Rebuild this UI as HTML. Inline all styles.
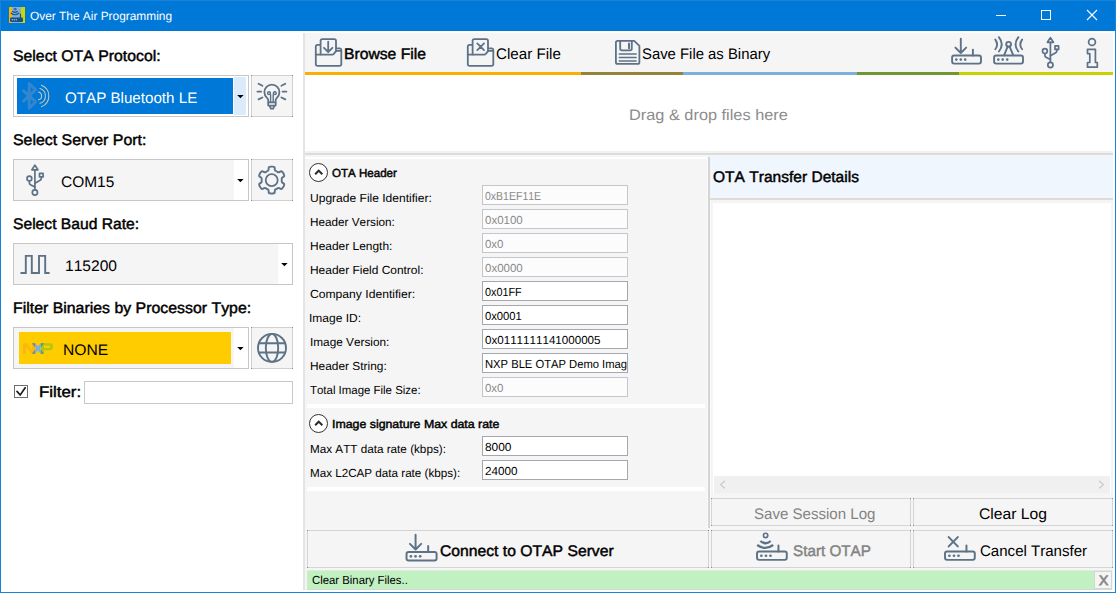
<!DOCTYPE html>
<html><head><meta charset="utf-8"><title>Over The Air Programming</title>
<style>
html,body{margin:0;padding:0;}
body{width:1116px;height:593px;overflow:hidden;background:#fff;position:relative;font-family:"Liberation Sans",sans-serif;}
.b{position:absolute;box-sizing:border-box;}
.t{position:absolute;white-space:nowrap;transform-origin:0 0;font-kerning:none;text-rendering:geometricPrecision;}
svg{position:absolute;left:0;top:0;}
</style></head><body>
<!-- window frame -->
<div class="b" style="left:0;top:0;width:1116px;height:593px;background:#1883d7"></div>
<div class="b" style="left:1px;top:1px;width:1114px;height:30px;background:#0078d7"></div>
<div class="b" style="left:1px;top:31px;width:1114px;height:561px;background:#fff"></div>
<!-- left panel -->
<div class="b" style="left:303px;top:33px;width:2px;height:557px;background:#e4e4e4"></div>
<!-- combo 1 -->
<div class="b" style="left:13px;top:75px;width:236px;height:42px;background:#fff;border:1px solid #c6c6c6"></div>
<div class="b" style="left:17px;top:78px;width:216px;height:36px;background:#0078d7"></div>
<div class="b" style="left:234px;top:77px;width:12px;height:38px;background:#dcebfc"></div>
<div class="b" style="left:251px;top:75px;width:42px;height:42px;background:#f5f5f5;border:1px solid #d0d0d0"></div>
<div class="b" style="left:251px;top:75px;width:1px;height:1px;background:#8c8c8c"></div>
<div class="b" style="left:292px;top:75px;width:1px;height:1px;background:#8c8c8c"></div>
<div class="b" style="left:251px;top:116px;width:1px;height:1px;background:#8c8c8c"></div>
<div class="b" style="left:292px;top:116px;width:1px;height:1px;background:#8c8c8c"></div>
<!-- combo 2 -->
<div class="b" style="left:13px;top:159px;width:236px;height:42px;background:#fff;border:1px solid #c6c6c6"></div>
<div class="b" style="left:14px;top:160px;width:220px;height:40px;background:#f5f5f5"></div>
<div class="b" style="left:251px;top:159px;width:42px;height:42px;background:#f5f5f5;border:1px solid #d0d0d0"></div>
<div class="b" style="left:251px;top:159px;width:1px;height:1px;background:#8c8c8c"></div>
<div class="b" style="left:292px;top:159px;width:1px;height:1px;background:#8c8c8c"></div>
<div class="b" style="left:251px;top:200px;width:1px;height:1px;background:#8c8c8c"></div>
<div class="b" style="left:292px;top:200px;width:1px;height:1px;background:#8c8c8c"></div>
<!-- combo 3 -->
<div class="b" style="left:13px;top:243px;width:280px;height:42px;background:#fff;border:1px solid #c6c6c6"></div>
<div class="b" style="left:14px;top:244px;width:264px;height:40px;background:#f5f5f5"></div>
<!-- combo 4 -->
<div class="b" style="left:13px;top:327px;width:236px;height:42px;background:#fff;border:1px solid #c6c6c6"></div>
<div class="b" style="left:14px;top:328px;width:220px;height:40px;background:#f5f5f5"></div>
<div class="b" style="left:19px;top:332px;width:212px;height:32px;background:#ffcc00"></div>
<div class="b" style="left:251px;top:327px;width:42px;height:42px;background:#f5f5f5;border:1px solid #d0d0d0"></div>
<div class="b" style="left:251px;top:327px;width:1px;height:1px;background:#8c8c8c"></div>
<div class="b" style="left:292px;top:327px;width:1px;height:1px;background:#8c8c8c"></div>
<div class="b" style="left:251px;top:368px;width:1px;height:1px;background:#8c8c8c"></div>
<div class="b" style="left:292px;top:368px;width:1px;height:1px;background:#8c8c8c"></div>
<!-- filter -->
<div class="b" style="left:14px;top:385px;width:14px;height:13px;background:#fff;border:1px solid #6e6e6e"></div>
<div class="b" style="left:84px;top:381px;width:209px;height:23px;background:#fff;border:1px solid #c8c8c8"></div>
<!-- toolbar -->
<div class="b" style="left:305px;top:33px;width:808px;height:39px;background:#f5f5f5"></div>
<div class="b" style="left:305px;top:72px;width:276px;height:3px;background:#f9b000"></div>
<div class="b" style="left:581px;top:72px;width:102px;height:3px;background:#958437"></div>
<div class="b" style="left:683px;top:72px;width:174px;height:3px;background:#7bb1db"></div>
<div class="b" style="left:857px;top:72px;width:102px;height:3px;background:#6f9830"></div>
<div class="b" style="left:959px;top:72px;width:154px;height:3px;background:#c9d200"></div>
<!-- separators below drop area -->
<div class="b" style="left:305px;top:151px;width:808px;height:2px;background:#f2f2f2"></div>
<div class="b" style="left:305px;top:153px;width:808px;height:2px;background:#dcdcdc"></div>
<div class="b" style="left:305px;top:155px;width:808px;height:2px;background:#f5f5f5"></div>
<!-- middle panel -->
<div class="b" style="left:305px;top:155px;width:808px;height:435px;background:#f5f5f5"></div>
<div class="b" style="left:305px;top:157px;width:403px;height:2px;background:#fff"></div>
<div class="b" style="left:307px;top:404px;width:398px;height:4px;background:#fff"></div>
<div class="b" style="left:307px;top:487px;width:398px;height:4px;background:#fff"></div>
<div class="b" style="left:707px;top:157px;width:4px;height:371px;background:#fafafa"></div>
<div class="b" style="left:708px;top:157px;width:2px;height:371px;background:#d4d4d4"></div>
<!-- expander circles -->
<div class="b" style="left:309px;top:163px;width:19px;height:19px;border-radius:50%;background:#fff;border:1px solid #333"></div>
<div class="b" style="left:309px;top:414px;width:19px;height:19px;border-radius:50%;background:#fff;border:1px solid #333"></div>
<div class="b" style="left:482px;top:185px;width:146px;height:20px;background:#fcfcfc;border:1px solid #c3c6cc"></div>
<div class="b" style="left:482px;top:209px;width:146px;height:20px;background:#fcfcfc;border:1px solid #c3c6cc"></div>
<div class="b" style="left:482px;top:233px;width:146px;height:20px;background:#fcfcfc;border:1px solid #c3c6cc"></div>
<div class="b" style="left:482px;top:257px;width:146px;height:20px;background:#fcfcfc;border:1px solid #c3c6cc"></div>
<div class="b" style="left:482px;top:281px;width:146px;height:20px;background:#fff;border:1px solid #a4a7ad"></div>
<div class="b" style="left:482px;top:305px;width:146px;height:20px;background:#fff;border:1px solid #a4a7ad"></div>
<div class="b" style="left:482px;top:329px;width:146px;height:20px;background:#fff;border:1px solid #a4a7ad"></div>
<div class="b" style="left:482px;top:353px;width:146px;height:20px;background:#fff;border:1px solid #a4a7ad"></div>
<div class="b" style="left:482px;top:377px;width:146px;height:20px;background:#fcfcfc;border:1px solid #c3c6cc"></div>
<div class="b" style="left:482px;top:436px;width:146px;height:20px;background:#fff;border:1px solid #a4a7ad"></div>
<div class="b" style="left:482px;top:460px;width:146px;height:20px;background:#fff;border:1px solid #a4a7ad"></div>
<!-- right panel -->
<div class="b" style="left:710px;top:157px;width:402px;height:39px;background:#eff6fd"></div>
<div class="b" style="left:710px;top:198px;width:403px;height:2px;background:#dcdcdc"></div>
<div class="b" style="left:713px;top:203px;width:398px;height:290px;background:#fff"></div>
<div class="b" style="left:714px;top:476px;width:396px;height:17px;background:#f0f0f0"></div>
<!-- buttons -->
<div class="b" style="left:711px;top:498px;width:200px;height:28px;background:#f5f5f5;border:1px solid #d4d4d4"></div>
<div class="b" style="left:711px;top:498px;width:1px;height:1px;background:#8c8c8c"></div>
<div class="b" style="left:910px;top:498px;width:1px;height:1px;background:#8c8c8c"></div>
<div class="b" style="left:711px;top:525px;width:1px;height:1px;background:#8c8c8c"></div>
<div class="b" style="left:910px;top:525px;width:1px;height:1px;background:#8c8c8c"></div>
<div class="b" style="left:913px;top:498px;width:200px;height:28px;background:#f5f5f5;border:1px solid #d4d4d4"></div>
<div class="b" style="left:913px;top:498px;width:1px;height:1px;background:#8c8c8c"></div>
<div class="b" style="left:1112px;top:498px;width:1px;height:1px;background:#8c8c8c"></div>
<div class="b" style="left:913px;top:525px;width:1px;height:1px;background:#8c8c8c"></div>
<div class="b" style="left:1112px;top:525px;width:1px;height:1px;background:#8c8c8c"></div>
<div class="b" style="left:307px;top:530px;width:402px;height:38px;background:#f5f5f5;border:1px solid #d4d4d4"></div>
<div class="b" style="left:307px;top:530px;width:1px;height:1px;background:#8c8c8c"></div>
<div class="b" style="left:708px;top:530px;width:1px;height:1px;background:#8c8c8c"></div>
<div class="b" style="left:307px;top:567px;width:1px;height:1px;background:#8c8c8c"></div>
<div class="b" style="left:708px;top:567px;width:1px;height:1px;background:#8c8c8c"></div>
<div class="b" style="left:711px;top:530px;width:200px;height:38px;background:#f5f5f5;border:1px solid #d4d4d4"></div>
<div class="b" style="left:711px;top:530px;width:1px;height:1px;background:#8c8c8c"></div>
<div class="b" style="left:910px;top:530px;width:1px;height:1px;background:#8c8c8c"></div>
<div class="b" style="left:711px;top:567px;width:1px;height:1px;background:#8c8c8c"></div>
<div class="b" style="left:910px;top:567px;width:1px;height:1px;background:#8c8c8c"></div>
<div class="b" style="left:913px;top:530px;width:200px;height:38px;background:#f5f5f5;border:1px solid #d4d4d4"></div>
<div class="b" style="left:913px;top:530px;width:1px;height:1px;background:#8c8c8c"></div>
<div class="b" style="left:1112px;top:530px;width:1px;height:1px;background:#8c8c8c"></div>
<div class="b" style="left:913px;top:567px;width:1px;height:1px;background:#8c8c8c"></div>
<div class="b" style="left:1112px;top:567px;width:1px;height:1px;background:#8c8c8c"></div>
<!-- status bar -->
<div class="b" style="left:307px;top:570px;width:805px;height:20px;background:#c1f0c1;border-top:1px solid #e2e8e2;border-bottom:1px solid #d3d9d3"></div>
<div class="b" style="left:1094px;top:571px;width:18px;height:18px;background:#f5f5f5;border:1px solid #d0d8d0"></div>
<span class="t" style="left:30.24px;top:10.00px;font:400 12px/12px 'Liberation Sans', sans-serif;font-kerning:none;color:#fff;transform:scaleX(0.9906)">Over The Air Programming</span>
<span class="t" style="left:13.01px;top:49.00px;font:400 15.3px/15.3px 'Liberation Sans', sans-serif;font-kerning:none;color:#000;-webkit-text-stroke:0.45px;transform:scaleX(1.0332)">Select OTA Protocol:</span>
<span class="t" style="left:65.08px;top:91.00px;font:400 15.3px/15.3px 'Liberation Sans', sans-serif;font-kerning:none;color:#fff;transform:scaleX(0.9906)">OTAP Bluetooth LE</span>
<span class="t" style="left:13.01px;top:133.00px;font:400 15.3px/15.3px 'Liberation Sans', sans-serif;font-kerning:none;color:#000;-webkit-text-stroke:0.45px;transform:scaleX(1.0390)">Select Server Port:</span>
<span class="t" style="left:60.61px;top:175.00px;font:400 15.3px/15.3px 'Liberation Sans', sans-serif;font-kerning:none;color:#000;transform:scaleX(1.0118)">COM15</span>
<span class="t" style="left:13.02px;top:217.00px;font:400 15.3px/15.3px 'Liberation Sans', sans-serif;font-kerning:none;color:#000;-webkit-text-stroke:0.45px;transform:scaleX(1.0231)">Select Baud Rate:</span>
<span class="t" style="left:65.31px;top:259.00px;font:400 15.3px/15.3px 'Liberation Sans', sans-serif;font-kerning:none;color:#000;transform:scaleX(1.0184)">115200</span>
<span class="t" style="left:12.53px;top:301.00px;font:400 15.3px/15.3px 'Liberation Sans', sans-serif;font-kerning:none;color:#000;-webkit-text-stroke:0.45px;transform:scaleX(1.0375)">Filter Binaries by Processor Type:</span>
<span class="t" style="left:63.32px;top:343.00px;font:400 15.3px/15.3px 'Liberation Sans', sans-serif;font-kerning:none;color:#000;transform:scaleX(1.0215)">NONE</span>
<span class="t" style="left:38.77px;top:385.00px;font:400 15.3px/15.3px 'Liberation Sans', sans-serif;font-kerning:none;color:#000;-webkit-text-stroke:0.45px;transform:scaleX(1.1013)">Filter:</span>
<span class="t" style="left:344.14px;top:47.00px;font:400 15.3px/15.3px 'Liberation Sans', sans-serif;font-kerning:none;color:#000;-webkit-text-stroke:0.45px;transform:scaleX(1.0250)">Browse File</span>
<span class="t" style="left:495.53px;top:47.00px;font:400 15.3px/15.3px 'Liberation Sans', sans-serif;font-kerning:none;color:#000;transform:scaleX(0.9905)">Clear File</span>
<span class="t" style="left:641.92px;top:47.00px;font:400 15.3px/15.3px 'Liberation Sans', sans-serif;font-kerning:none;color:#000;transform:scaleX(0.9719)">Save File as Binary</span>
<span class="t" style="left:629.26px;top:108.00px;font:400 15.3px/15.3px 'Liberation Sans', sans-serif;font-kerning:none;color:#8c8c8c;transform:scaleX(1.0675)">Drag &amp; drop files here</span>
<span class="t" style="left:332.07px;top:168.00px;font:400 11.7px/11.7px 'Liberation Sans', sans-serif;font-kerning:none;color:#000;-webkit-text-stroke:0.45px;transform:scaleX(0.9881)">OTA Header</span>
<span class="t" style="left:309.57px;top:193.00px;font:400 11.7px/11.7px 'Liberation Sans', sans-serif;font-kerning:none;color:#000;transform:scaleX(1.0302)">Upgrade File Identifier:</span>
<span class="t" style="left:309.64px;top:217.00px;font:400 11.7px/11.7px 'Liberation Sans', sans-serif;font-kerning:none;color:#000;transform:scaleX(1.0046)">Header Version:</span>
<span class="t" style="left:309.62px;top:241.00px;font:400 11.7px/11.7px 'Liberation Sans', sans-serif;font-kerning:none;color:#000;transform:scaleX(1.0225)">Header Length:</span>
<span class="t" style="left:309.62px;top:265.00px;font:400 11.7px/11.7px 'Liberation Sans', sans-serif;font-kerning:none;color:#000;transform:scaleX(1.0213)">Header Field Control:</span>
<span class="t" style="left:309.68px;top:289.00px;font:400 11.7px/11.7px 'Liberation Sans', sans-serif;font-kerning:none;color:#000;transform:scaleX(1.0382)">Company Identifier:</span>
<span class="t" style="left:309.49px;top:313.00px;font:400 11.7px/11.7px 'Liberation Sans', sans-serif;font-kerning:none;color:#000;transform:scaleX(1.0274)">Image ID:</span>
<span class="t" style="left:309.51px;top:337.00px;font:400 11.7px/11.7px 'Liberation Sans', sans-serif;font-kerning:none;color:#000;transform:scaleX(1.0086)">Image Version:</span>
<span class="t" style="left:309.62px;top:361.00px;font:400 11.7px/11.7px 'Liberation Sans', sans-serif;font-kerning:none;color:#000;transform:scaleX(1.0176)">Header String:</span>
<span class="t" style="left:309.74px;top:385.00px;font:400 11.7px/11.7px 'Liberation Sans', sans-serif;font-kerning:none;color:#000;transform:scaleX(0.9784)">Total Image File Size:</span>
<span class="t" style="left:485.09px;top:191.00px;font:400 11.7px/11.7px 'Liberation Sans', sans-serif;font-kerning:none;color:#8a8a8a;transform:scaleX(0.8995)">0xB1EF11E</span>
<span class="t" style="left:485.05px;top:215.00px;font:400 11.7px/11.7px 'Liberation Sans', sans-serif;font-kerning:none;color:#8a8a8a;transform:scaleX(0.9848)">0x0100</span>
<span class="t" style="left:485.05px;top:239.00px;font:400 11.7px/11.7px 'Liberation Sans', sans-serif;font-kerning:none;color:#8a8a8a;transform:scaleX(0.9805)">0x0</span>
<span class="t" style="left:485.05px;top:263.00px;font:400 11.7px/11.7px 'Liberation Sans', sans-serif;font-kerning:none;color:#8a8a8a;transform:scaleX(0.9848)">0x0000</span>
<span class="t" style="left:485.08px;top:287.00px;font:400 11.7px/11.7px 'Liberation Sans', sans-serif;font-kerning:none;color:#000;transform:scaleX(0.9267)">0x01FF</span>
<span class="t" style="left:485.06px;top:311.00px;font:400 11.7px/11.7px 'Liberation Sans', sans-serif;font-kerning:none;color:#000;transform:scaleX(0.9610)">0x0001</span>
<span class="t" style="left:485.05px;top:335.00px;font:400 11.7px/11.7px 'Liberation Sans', sans-serif;font-kerning:none;color:#000;transform:scaleX(0.9929)">0x0111111141000005</span>
<span class="t" style="left:484.98px;top:359.00px;font:400 11.7px/11.7px 'Liberation Sans', sans-serif;font-kerning:none;color:#000;transform:scaleX(0.9588)">NXP BLE OTAP Demo Imag</span>
<span class="t" style="left:485.05px;top:383.00px;font:400 11.7px/11.7px 'Liberation Sans', sans-serif;font-kerning:none;color:#8a8a8a;transform:scaleX(0.9805)">0x0</span>
<span class="t" style="left:331.50px;top:419.00px;font:400 11.7px/11.7px 'Liberation Sans', sans-serif;font-kerning:none;color:#000;-webkit-text-stroke:0.45px;transform:scaleX(1.0556)">Image signature Max data rate</span>
<span class="t" style="left:309.54px;top:444.00px;font:400 11.7px/11.7px 'Liberation Sans', sans-serif;font-kerning:none;color:#000;transform:scaleX(1.0010)">Max ATT data rate (kbps):</span>
<span class="t" style="left:309.54px;top:468.00px;font:400 11.7px/11.7px 'Liberation Sans', sans-serif;font-kerning:none;color:#000;transform:scaleX(0.9964)">Max L2CAP data rate (kbps):</span>
<span class="t" style="left:484.68px;top:442.00px;font:400 11.7px/11.7px 'Liberation Sans', sans-serif;font-kerning:none;color:#000;transform:scaleX(1.0175)">8000</span>
<span class="t" style="left:484.61px;top:466.00px;font:400 11.7px/11.7px 'Liberation Sans', sans-serif;font-kerning:none;color:#000;transform:scaleX(1.0003)">24000</span>
<span class="t" style="left:712.89px;top:170.00px;font:400 15.3px/15.3px 'Liberation Sans', sans-serif;font-kerning:none;color:#000;-webkit-text-stroke:0.45px;transform:scaleX(1.0157)">OTA Transfer Details</span>
<span class="t" style="left:753.52px;top:507.00px;font:400 15.3px/15.3px 'Liberation Sans', sans-serif;font-kerning:none;color:#838383;transform:scaleX(0.9848)">Save Session Log</span>
<span class="t" style="left:979.00px;top:507.00px;font:400 15.3px/15.3px 'Liberation Sans', sans-serif;font-kerning:none;color:#000;transform:scaleX(1.0251)">Clear Log</span>
<span class="t" style="left:440.13px;top:544.00px;font:400 15.3px/15.3px 'Liberation Sans', sans-serif;font-kerning:none;color:#000;-webkit-text-stroke:0.45px;transform:scaleX(1.0265)">Connect to OTAP Server</span>
<span class="t" style="left:793.23px;top:544.00px;font:400 15.3px/15.3px 'Liberation Sans', sans-serif;font-kerning:none;color:#838383;-webkit-text-stroke:0.45px;transform:scaleX(0.9965)">Start OTAP</span>
<span class="t" style="left:980.44px;top:544.00px;font:400 15.3px/15.3px 'Liberation Sans', sans-serif;font-kerning:none;color:#000;transform:scaleX(0.9841)">Cancel Transfer</span>
<span class="t" style="left:311.62px;top:575.00px;font:400 11.7px/11.7px 'Liberation Sans', sans-serif;font-kerning:none;color:#000;transform:scaleX(0.9705)">Clear Binary Files..</span>
<span class="t" style="left:1098.90px;top:574.00px;font:400 13.5px/13.5px 'Liberation Sans', sans-serif;font-kerning:none;color:#8a8a8a;-webkit-text-stroke:0.8px;transform:scaleX(1.0306)">X</span>
<svg width="1116" height="593" viewBox="0 0 1116 593" fill="none" stroke-linecap="round" stroke-linejoin="round">
<g stroke="none">
<rect x="9" y="7" width="3" height="16" fill="#f9b500"/>
<rect x="12" y="7" width="9" height="16" fill="#7bb1db"/>
<rect x="21" y="7" width="4" height="16" fill="#ccd600"/>
<rect x="10" y="17.5" width="13" height="4.5" rx="1" fill="#1f4f82"/>
</g>
<path d="M20.5,14 V18" stroke="#1f4f82" stroke-width="1.2"/>
<circle cx="15" cy="9.2" r="1" stroke="#1f4f82" stroke-width="0.8"/>
<path d="M12.6,11.5 Q15,13.3 17.4,11.5 M11.2,13.2 Q15,16.2 18.8,13.2" stroke="#1f4f82" stroke-width="1.1"/>
<g fill="#9cc4ea" stroke="none"><circle cx="12.3" cy="19.8" r="0.7"/><circle cx="14.3" cy="19.8" r="0.7"/><circle cx="16.3" cy="19.8" r="0.7"/></g>
<g stroke="#fff" stroke-width="1" stroke-linecap="butt" shape-rendering="crispEdges">
<path d="M996,15.5 H1006"/>
<rect x="1041.5" y="10.5" width="9" height="9"/>
</g>
<path d="M1087,10 L1097,20 M1097,10 L1087,20" stroke="#fff" stroke-width="1.1" stroke-linecap="butt"/>
<g transform="translate(0,0)" stroke="#5d7287" stroke-width="1.8">
<path d="M320,44.8 H317.5 Q315.8,44.8 315.8,46.5 V64 Q315.8,65.8 317.5,65.8 H339.5 Q341.3,65.8 341.3,64 V50 Q341.3,48.3 339.5,48.3 H337"/>
<path d="M315.8,54.6 H332.3 Q333.2,54.6 333.8,53.9 L335.6,51.6 Q336.2,50.9 337.2,50.9 H341.3"/>
<path d="M320.6,54.4 V40.8 Q320.6,39.1 322.3,39.1 H334.3 Q336,39.1 336,40.8 V50.8"/>
<path d="M328.2,41.6 V52 M324,47.8 L328.2,52 L332.4,47.8" stroke-width="1.8"/>
</g>
<g transform="translate(152,0)" stroke="#5d7287" stroke-width="1.8">
<path d="M320,44.8 H317.5 Q315.8,44.8 315.8,46.5 V64 Q315.8,65.8 317.5,65.8 H339.5 Q341.3,65.8 341.3,64 V50 Q341.3,48.3 339.5,48.3 H337"/>
<path d="M315.8,54.6 H332.3 Q333.2,54.6 333.8,53.9 L335.6,51.6 Q336.2,50.9 337.2,50.9 H341.3"/>
<path d="M320.6,54.4 V40.8 Q320.6,39.1 322.3,39.1 H334.3 Q336,39.1 336,40.8 V50.8"/>
<path d="M325.3,43.4 L332,50.1 M332,43.4 L325.3,50.1" stroke-width="1.8"/>
</g>
<g stroke="#5d7287" stroke-width="1.8">
<path d="M617.6,40.9 H634.2 L639.4,45.8 V62.2 Q639.4,63.9 637.7,63.9 H617.6 Q615.9,63.9 615.9,62.2 V42.6 Q615.9,40.9 617.6,40.9 Z"/>
<path d="M620.2,41 V48.5 Q620.2,50.3 622,50.3 H630 Q631.8,50.3 631.8,48.5 V41"/>
<path d="M629,43.4 V48.2" stroke-width="2"/>
<path d="M619.4,54 H636 M619.4,57.5 H636 M619.4,61 H636" stroke-width="1.7"/>
</g>
<g transform="translate(0,0) scale(1)" stroke="#5d7287" stroke-width="1.9">
<rect x="952.1" y="55.5" width="28.9" height="8.1" rx="2"/>
<path d="M972.9,49.6 V55.5"/>
<g fill="#5d7287" stroke="none"><circle cx="956.3" cy="59.6" r="1.3"/><circle cx="960.8" cy="59.6" r="1.3"/><circle cx="965.2" cy="59.6" r="1.3"/></g>
<path d="M960.8,38.8 V53 M955.4,47.6 L960.8,53 L966.2,47.6"/>
</g>
<g stroke="#5d7287" stroke-width="1.9">
<rect x="994.1" y="55.5" width="28.9" height="8.1" rx="2"/>
<g fill="#5d7287" stroke="none"><circle cx="998.3" cy="59.6" r="1.3"/><circle cx="1002.7" cy="59.6" r="1.3"/><circle cx="1007.2" cy="59.6" r="1.3"/></g>
<circle cx="1008.6" cy="44.3" r="2.4"/>
<path d="M1007.6,46.6 L1004.2,55.2 M1009.6,46.6 L1013.2,55.2"/>
<path d="M995.3,39.6 Q998.9,44.4 995.3,49.2 M998.9,37.2 Q1004.6,44.4 998.9,51.5 M1022.1,39.6 Q1018.5,44.4 1022.1,49.2 M1018.4,37.2 Q1012.7,44.4 1018.4,51.5"/>
</g>
<g transform="translate(0,0)" stroke="#5d7287" stroke-width="1.7">
<path d="M1050.4,42.4 V62.2"/>
<path d="M1050.4,37.6 L1047.4,42.3 H1053.4 Z"/>
<circle cx="1050.4" cy="65" r="2.6"/>
<circle cx="1044.9" cy="51.1" r="2.4"/>
<path d="M1044.9,53.6 V55.4 Q1044.9,56.6 1046,57.2 L1050.4,59.6"/>
<rect x="1055" y="45.8" width="3.6" height="3.6"/>
<path d="M1056.8,49.6 V51 Q1056.8,52.2 1055.7,52.8 L1050.4,55.8"/>
</g>
<g transform="translate(-1015.5,127.5)" stroke="#5d7287" stroke-width="1.7">
<path d="M1050.4,42.4 V62.2"/>
<path d="M1050.4,37.6 L1047.4,42.3 H1053.4 Z"/>
<circle cx="1050.4" cy="65" r="2.6"/>
<circle cx="1044.9" cy="51.1" r="2.4"/>
<path d="M1044.9,53.6 V55.4 Q1044.9,56.6 1046,57.2 L1050.4,59.6"/>
<rect x="1055" y="45.8" width="3.6" height="3.6"/>
<path d="M1056.8,49.6 V51 Q1056.8,52.2 1055.7,52.8 L1050.4,55.8"/>
</g>
<g stroke="#5d7287" stroke-width="1.7">
<circle cx="1092" cy="42" r="3.4"/>
<path d="M1087.5,49.3 H1095.4 V62.5 H1097.3 V67.2 H1087.5 V62.5 H1089.8 V53.6 H1087.5 Z"/>
</g>
<path d="M22.6,89.9 L35.6,101.9 L29.2,108.2 V83.6 L35.6,89.9 L22.6,101.9" stroke="#3387cc" stroke-width="3" stroke-linejoin="round" stroke-linecap="butt"/>
<path d="M38.43,91.99 A4,4 0 0 1 38.43,99.81 M40.01,88.48 A7.8,7.8 0 0 1 40.01,103.32 M41.42,85.16 A11.5,11.5 0 0 1 41.42,106.64" stroke="#c3c7b4" stroke-width="1.05"/>
<path d="M237.20000000000002,95 H243.6 L240.4,98.3 Z" fill="#000" stroke="none"/>
<path d="M237.20000000000002,179 H243.6 L240.4,182.3 Z" fill="#000" stroke="none"/>
<path d="M281.2,263 H287.59999999999997 L284.4,266.3 Z" fill="#000" stroke="none"/>
<path d="M237.20000000000002,347 H243.6 L240.4,350.3 Z" fill="#000" stroke="none"/>
<g stroke="#5d7287" stroke-width="1.8">
<path d="M268.3,102.2 V100.8 Q268.3,99 266.8,97.6 A7.5,7.5 0 1 1 277,97.6 Q275.6,99 275.6,100.8 V102.2"/>
<rect x="268.2" y="102.3" width="7.5" height="3.3" rx="0.6"/>
<path d="M269.8,106 L270.8,108.6 H273.2 L274.2,106"/>
<circle cx="269" cy="93.2" r="1.4" stroke-width="1.5"/><circle cx="274.8" cy="93.2" r="1.4" stroke-width="1.5"/>
<path d="M270.6,94.6 V101.8 M273.2,94.6 V101.8" stroke-width="1.4"/>
<path d="M257.4,91.6 H261.2 M258.5,83.8 L262.4,85.8 M258.5,99.4 L262.4,97.5 M282.6,91.6 H286.4 M285.3,83.8 L281.4,85.8 M285.3,99.4 L281.4,97.5"/>
</g>
<path d="M267.84,170.78 Q268.55,170.40 268.59,169.60 L268.67,167.84 Q268.71,167.04 269.50,166.91 L270.91,166.67 Q271.70,166.54 272.49,166.67 L273.90,166.91 Q274.69,167.04 274.73,167.84 L274.81,169.60 Q274.85,170.40 275.56,170.78 L276.02,171.02 Q276.72,171.40 277.40,171.82 L277.85,172.10 Q278.53,172.52 279.24,172.15 L280.80,171.34 Q281.52,170.98 282.02,171.60 L282.94,172.70 Q283.44,173.32 283.72,174.07 L284.23,175.41 Q284.51,176.16 283.83,176.59 L282.35,177.55 Q281.68,177.98 281.70,178.78 L281.72,179.30 Q281.75,180.10 281.72,180.90 L281.70,181.42 Q281.68,182.22 282.35,182.65 L283.83,183.61 Q284.51,184.04 284.23,184.79 L283.72,186.13 Q283.44,186.88 282.94,187.50 L282.02,188.60 Q281.52,189.22 280.80,188.86 L279.24,188.05 Q278.53,187.68 277.85,188.10 L277.40,188.38 Q276.72,188.80 276.02,189.18 L275.56,189.42 Q274.85,189.80 274.81,190.60 L274.73,192.36 Q274.69,193.16 273.90,193.29 L272.49,193.53 Q271.70,193.66 270.91,193.53 L269.50,193.29 Q268.71,193.16 268.67,192.36 L268.59,190.60 Q268.55,189.80 267.84,189.42 L267.38,189.18 Q266.68,188.80 266.00,188.38 L265.55,188.10 Q264.87,187.68 264.16,188.05 L262.60,188.86 Q261.88,189.22 261.38,188.60 L260.46,187.50 Q259.96,186.88 259.68,186.13 L259.17,184.79 Q258.89,184.04 259.57,183.61 L261.05,182.65 Q261.72,182.22 261.70,181.42 L261.68,180.90 Q261.65,180.10 261.68,179.30 L261.70,178.78 Q261.72,177.98 261.05,177.55 L259.57,176.59 Q258.89,176.16 259.17,175.41 L259.68,174.07 Q259.96,173.32 260.46,172.70 L261.38,171.60 Q261.88,170.98 262.60,171.34 L264.16,172.15 Q264.87,172.52 265.55,172.10 L266.00,171.82 Q266.68,171.40 267.38,171.02 Z" stroke="#5d7287" stroke-width="1.9" stroke-linejoin="round"/>
<circle cx="271.7" cy="180.1" r="6" stroke="#5d7287" stroke-width="1.8"/>
<path d="M20.5,273 H25.8 V255.9 H31.8 V273 H39 V255.9 H45.2 V273 H49.6" stroke="#5d7287" stroke-width="1.9" stroke-linejoin="miter" stroke-linecap="butt"/>
<g stroke="none">
<path d="M23,343.2 H27 L32,350 V343.2 H35 V353.8 H31.5 L26,346.8 V353.8 H23 Z" fill="#fbb615"/>
<path d="M41,343.2 H50 Q53,343.2 53,346.6 Q53,350.2 50,350.2 H44 V353.8 H41 Z M44,345.6 V347.9 H49.4 Q50.2,347.9 50.2,346.7 Q50.2,345.6 49.4,345.6 Z" fill="#b4c414" fill-rule="evenodd"/>
<path d="M32,343.2 H35.5 L38,346.6 L40.5,343.2 H44 L40,348.5 L44,353.8 H40.5 L38,350.4 L35.5,353.8 H32 L36,348.5 Z" fill="#7bb1db"/>
<path d="M32,343.2 H35 V347.2 Z M32,353.8 H35 V349.8 Z" fill="#8a8a4a"/>
<path d="M44,343.2 H41 V347.2 Z M44,353.8 H41 V349.8 Z" fill="#6f9a3a"/>
</g>
<g stroke="#5d7287" stroke-width="1.9">
<circle cx="272" cy="347.9" r="14"/>
<ellipse cx="272" cy="347.9" rx="6.2" ry="14"/>
<path d="M258.8,343.2 H285.2 M258.8,352.5 H285.2" stroke-linecap="butt"/>
</g>
<path d="M17,391.4 L20.2,395 L25.2,387.8" stroke="#1a1a1a" stroke-width="1.7" stroke-linejoin="miter"/>
<path d="M315.2,174.3 L318.7,170.6 L322.3,174.3" stroke="#2a2a2a" stroke-width="2" stroke-linejoin="miter" stroke-linecap="butt"/>
<path d="M315.2,425.3 L318.7,421.6 L322.3,425.3" stroke="#2a2a2a" stroke-width="2" stroke-linejoin="miter" stroke-linecap="butt"/>
<path d="M724.5,481.2 L720.5,484.6 L724.5,488" stroke="#c8c8c8" stroke-width="1.2"/>
<path d="M1099.5,481.2 L1103.5,484.6 L1099.5,488" stroke="#c8c8c8" stroke-width="1.2"/>
<g transform="translate(-583.652,494.32399999999996) scale(1.04)" stroke="#5d7287" stroke-width="1.9">
<rect x="952.1" y="55.5" width="28.9" height="8.1" rx="2"/>
<path d="M972.9,49.6 V55.5"/>
<g fill="#5d7287" stroke="none"><circle cx="956.3" cy="59.6" r="1.3"/><circle cx="960.8" cy="59.6" r="1.3"/><circle cx="965.2" cy="59.6" r="1.3"/></g>
<path d="M960.8,38.8 V53 M955.4,47.6 L960.8,53 L966.2,47.6"/>
</g>
<g transform="translate(-223.6389999999999,494.36800000000005) scale(1.03)" stroke="#5d7287" stroke-width="1.9">
<rect x="952.1" y="55.5" width="28.9" height="8.1" rx="2"/>
<path d="M972.9,49.6 V55.5"/>
<g fill="#5d7287" stroke="none"><circle cx="956.3" cy="59.6" r="1.3"/><circle cx="960.8" cy="59.6" r="1.3"/><circle cx="965.2" cy="59.6" r="1.3"/></g>
<circle cx="960.43" cy="39.84" r="2.1" stroke-width="1.6"/><path d="M955.28,45.27 Q960.33,49.55 965.38,45.27 M952.27,49.16 Q960.04,54.79 967.80,49.16" stroke-width="2.2" stroke-linecap="butt"/>
</g>
<g transform="translate(-35.638999999999896,494.36800000000005) scale(1.03)" stroke="#5d7287" stroke-width="1.9">
<rect x="952.1" y="55.5" width="28.9" height="8.1" rx="2"/>
<path d="M972.9,49.6 V55.5"/>
<g fill="#5d7287" stroke="none"><circle cx="956.3" cy="59.6" r="1.3"/><circle cx="960.8" cy="59.6" r="1.3"/><circle cx="965.2" cy="59.6" r="1.3"/></g>
<path d="M955.67,41.49 L964.50,50.52 M964.50,41.49 L955.67,50.52" stroke-width="2"/>
</g>
</svg>
</body></html>
